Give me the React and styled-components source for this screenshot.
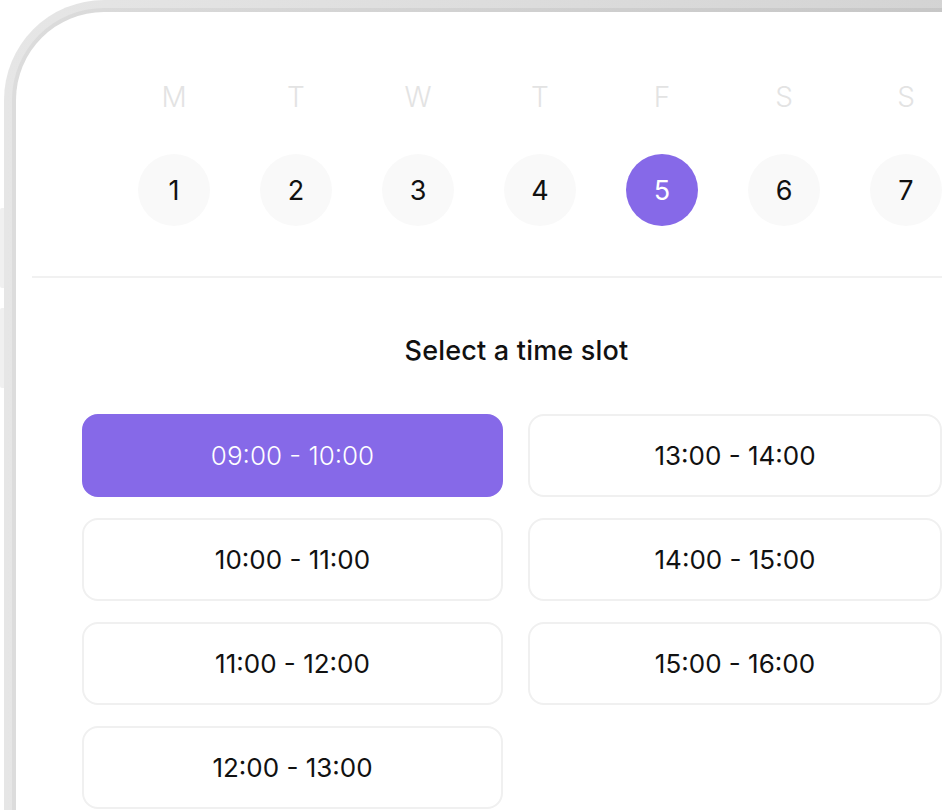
import React from "react";
import styled, { createGlobalStyle } from "styled-components";

const GlobalStyles = createGlobalStyle`
  html, body {
    margin: 0;
    padding: 0;
    background: #ffffff;
    overflow: hidden;
  }
  body {
    font-family: "Inter", "Noto Sans", sans-serif;
    color: #111111;
  }
`;

const Page = styled.div`
  display: flex;
  width: 942px;
  height: 810px;
  overflow: hidden;
`;

const SideKeys = styled.div`
  display: flex;
  flex-direction: column;
  gap: 20px;
  width: 4px;
  padding-top: 208px;
  flex-shrink: 0;
`;

const SideKey = styled.div`
  width: 4px;
  height: 80px;
  background: #f0f0f0;
  border-radius: 2px 0 0 2px;
`;

const Shell = styled.div`
  flex: 1;
  padding: 8px 0 0 8px;
  border-top-left-radius: 100px;
  background: linear-gradient(90deg, #e6e6e6 0%, #dcdcdc 55%, #d3d3d3 100%);
`;

const Bezel = styled.div`
  height: 100%;
  padding: 4px 0 0 4px;
  box-sizing: border-box;
  border-top-left-radius: 92px;
  background: linear-gradient(90deg, #dcdcdc 0%, #d0d0d0 55%, #c6c6c6 100%);
`;

const Screen = styled.div`
  height: 100%;
  background: #ffffff;
  border-top-left-radius: 88px;
  overflow: hidden;
  display: flex;
  flex-direction: column;
`;

const Week = styled.div`
  display: grid;
  grid-template-columns: repeat(7, 122px);
  grid-auto-rows: auto;
  padding-left: 97px;
  margin-top: 65px;
  row-gap: 37px;
`;

const DayLetter = styled.div`
  height: 40px;
  display: flex;
  align-items: center;
  justify-content: center;
  font-size: 28px;
  font-weight: 300;
  color: #e3e3e3;
`;

const DateCell = styled.div`
  display: flex;
  justify-content: center;
`;

const DateCircle = styled.div`
  width: 72px;
  height: 72px;
  border-radius: 50%;
  display: flex;
  align-items: center;
  justify-content: center;
  font-size: 27px;
  font-weight: 400;
  background: ${(p) => (p.$active ? "#8669e8" : "#f9f9f9")};
  color: ${(p) => (p.$active ? "#ffffff" : "#111111")};
`;

const Divider = styled.div`
  height: 2px;
  background: #f1f1f1;
  margin: 50px 0 0 16px;
`;

const Title = styled.h2`
  margin: 57px 0 0;
  padding-left: 50px;
  line-height: 32px;
  text-align: center;
  font-size: 27px;
  font-weight: 500;
  letter-spacing: 0.2px;
  color: #111111;
`;

const Slots = styled.div`
  display: grid;
  grid-template-columns: 421px 414px;
  grid-auto-rows: 83px;
  column-gap: 25px;
  row-gap: 21px;
  margin: 47px 0 0 66px;
`;

const Slot = styled.button`
  box-sizing: border-box;
  border-radius: 16px;
  border: 2px solid ${(p) => (p.$active ? "#8669e8" : "#f0f0f0")};
  background: ${(p) => (p.$active ? "#8669e8" : "#ffffff")};
  color: ${(p) => (p.$active ? "#ffffff" : "#111111")};
  font-family: "Inter", "Noto Sans", sans-serif;
  font-size: 26px;
  font-weight: ${(p) => (p.$active ? 300 : 400)};
  letter-spacing: 0;
  display: flex;
  align-items: center;
  justify-content: center;
  padding: 0;
`;

const days = ["M", "T", "W", "T", "F", "S", "S"];
const dates = [1, 2, 3, 4, 5, 6, 7];
const slots = [
  "09:00 - 10:00",
  "13:00 - 14:00",
  "10:00 - 11:00",
  "14:00 - 15:00",
  "11:00 - 12:00",
  "15:00 - 16:00",
  "12:00 - 13:00",
];

export default function App() {
  const [day, setDay] = React.useState(5);
  const [slot, setSlot] = React.useState("09:00 - 10:00");

  return (
    <Page>
      <GlobalStyles />
      <SideKeys>
        <SideKey />
        <SideKey />
      </SideKeys>
      <Shell>
        <Bezel>
          <Screen>
            <Week>
              {days.map((d, i) => (
                <DayLetter key={"l" + i}>{d}</DayLetter>
              ))}
              {dates.map((n) => (
                <DateCell key={n}>
                  <DateCircle $active={n === day} onClick={() => setDay(n)}>
                    {n}
                  </DateCircle>
                </DateCell>
              ))}
            </Week>
            <Divider />
            <Title>Select a time slot</Title>
            <Slots>
              {slots.map((s) => (
                <Slot key={s} $active={s === slot} onClick={() => setSlot(s)}>
                  {s}
                </Slot>
              ))}
            </Slots>
          </Screen>
        </Bezel>
      </Shell>
    </Page>
  );
}
